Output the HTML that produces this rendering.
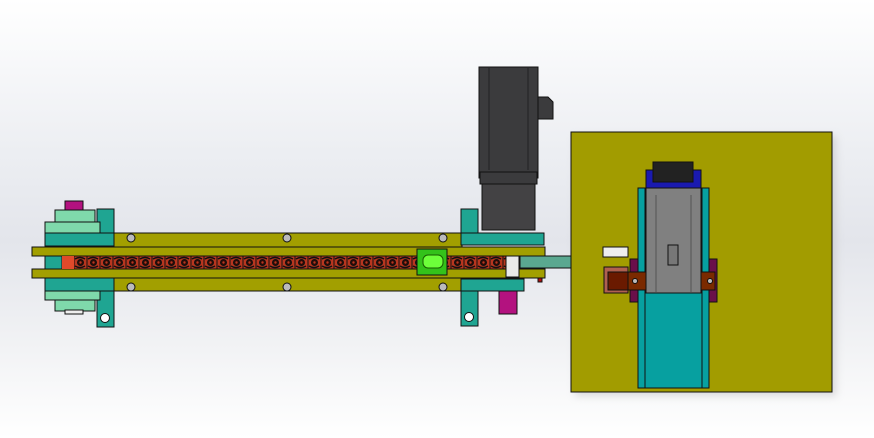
<!DOCTYPE html><html><head><style>
html,body{margin:0;padding:0;width:874px;height:438px;overflow:hidden;background:linear-gradient(180deg,#ffffff 0%,#eceef2 35%,#e3e5eb 55%,#f2f3f5 80%,#ffffff 100%);}
svg{position:absolute;left:0;top:0}
</style></head><body>
<svg width="874" height="438" viewBox="0 0 874 438" stroke="#111" stroke-width="1">
<defs><filter id="sh"><feGaussianBlur stdDeviation="4"/></filter>
<pattern id="chain" x="74" y="256" width="13" height="13" patternUnits="userSpaceOnUse">
<rect width="13" height="13" fill="#b8361f"/>
<path d="M1 3 Q6 0 11 3 M1 10 Q6 13 11 10" stroke="#111" stroke-width="1.4" fill="none"/>
<circle cx="6.5" cy="6.5" r="3" fill="#2a0a05" stroke="#111"/>
<circle cx="6.5" cy="6.5" r="1.2" fill="#b8361f" stroke="none"/>
</pattern></defs>
<rect x="575" y="136" width="261" height="260" fill="#bbb" opacity=".5" filter="url(#sh)" stroke="none"/>
<!-- motor -->
<rect x="479" y="67" width="59" height="111" fill="#3b3b3d"/>
<line x1="489" y1="68" x2="489" y2="170" stroke="#222"/><line x1="528" y1="68" x2="528" y2="170" stroke="#222"/>
<path d="M538 97 H548 L553 102 V119 H538 Z" fill="#3b3b3d"/>
<rect x="480" y="172" width="57" height="12" fill="#3b3b3d"/>
<rect x="482" y="184" width="53" height="46" fill="#434244"/>
<!-- left teal brackets -->
<rect x="97" y="209" width="17" height="24" fill="#1fa592"/>
<rect x="97" y="291" width="17" height="36" fill="#1fa592"/><circle cx="105" cy="318" r="4.5" fill="#fff"/>
<rect x="65" y="201" width="18" height="10" fill="#b3127f"/>
<rect x="55" y="210" width="40" height="13" fill="#7fd9ab"/>
<rect x="45" y="222" width="55" height="11" fill="#7fd9ab"/>
<rect x="45" y="291" width="55" height="9" fill="#7fd9ab"/>
<rect x="55" y="300" width="40" height="11" fill="#7fd9ab"/>
<rect x="65" y="310" width="18" height="4" fill="#eee"/>
<rect x="45" y="233" width="69" height="13" fill="#1fa592"/>
<rect x="45" y="278" width="69" height="13" fill="#1fa592"/>
<rect x="45" y="256" width="17" height="13" fill="#1fa592"/>
<!-- mid teal brackets -->
<rect x="461" y="209" width="17" height="24" fill="#1fa592"/>
<rect x="461" y="291" width="17" height="35" fill="#1fa592"/><circle cx="469" cy="317" r="4.5" fill="#fff"/>
<rect x="499" y="291" width="18" height="23" fill="#b3127f"/>
<!-- plates -->
<rect x="114" y="233" width="348" height="23" fill="#a29f00"/>
<rect x="114" y="269" width="348" height="22" fill="#a29f00"/>
<rect x="461" y="233" width="83" height="12" fill="#1fa592"/>
<rect x="461" y="279" width="63" height="12" fill="#1fa592"/>
<rect x="32" y="247" width="513" height="9" fill="#a29f00"/>
<rect x="32" y="269" width="513" height="9" fill="#a29f00"/>
<rect x="62" y="256" width="444" height="13" fill="url(#chain)"/>
<rect x="62" y="256" width="12" height="13" fill="#e04a2a" stroke="none"/>
<rect x="417" y="249" width="30" height="26" fill="#33c21a"/>
<rect x="423" y="255" width="20" height="13" rx="5" fill="#6dff3a" stroke="#185c00"/>
<rect x="506" y="256" width="13" height="21" fill="#e9e9e9"/>
<rect x="520" y="256" width="52" height="12" fill="#5aa890"/>
<rect x="538" y="278" width="4" height="4" fill="#b01010"/>
<g fill="#bbb"><circle cx="131" cy="238" r="4"/><circle cx="287" cy="238" r="4"/><circle cx="443" cy="238" r="4"/>
<circle cx="131" cy="287" r="4"/><circle cx="287" cy="287" r="4"/><circle cx="443" cy="287" r="4"/></g>
<!-- right plate -->
<rect x="571" y="132" width="261" height="260" fill="#a29c00"/>
<rect x="638" y="188" width="71" height="200" fill="#07a0a0"/>
<line x1="645" y1="188" x2="645" y2="388"/><line x1="702" y1="188" x2="702" y2="388"/>
<rect x="630" y="259" width="8" height="43" fill="#6a0f4a"/><rect x="709" y="259" width="8" height="43" fill="#6a0f4a"/>
<rect x="646" y="188" width="55" height="105" fill="#808080"/>
<line x1="656" y1="195" x2="656" y2="292" stroke="#555"/><line x1="691" y1="195" x2="691" y2="292" stroke="#555"/>
<rect x="668" y="245" width="10" height="20" fill="#777"/>
<rect x="646" y="170" width="55" height="18" fill="#1a1ab0"/>
<rect x="653" y="162" width="40" height="20" fill="#222"/>
<rect x="603" y="247" width="25" height="10" fill="#eee"/>
<rect x="604" y="267" width="24" height="26" fill="#b06050"/>
<rect x="608" y="272" width="20" height="18" fill="#6a1a00"/>
<rect x="628" y="272" width="18" height="18" fill="#7a2a00"/><circle cx="635" cy="281" r="2.5" fill="#bbb"/>
<rect x="701" y="272" width="14" height="18" fill="#7a2a00"/><circle cx="710" cy="281" r="2.5" fill="#bbb"/>
</svg>
</body></html>
